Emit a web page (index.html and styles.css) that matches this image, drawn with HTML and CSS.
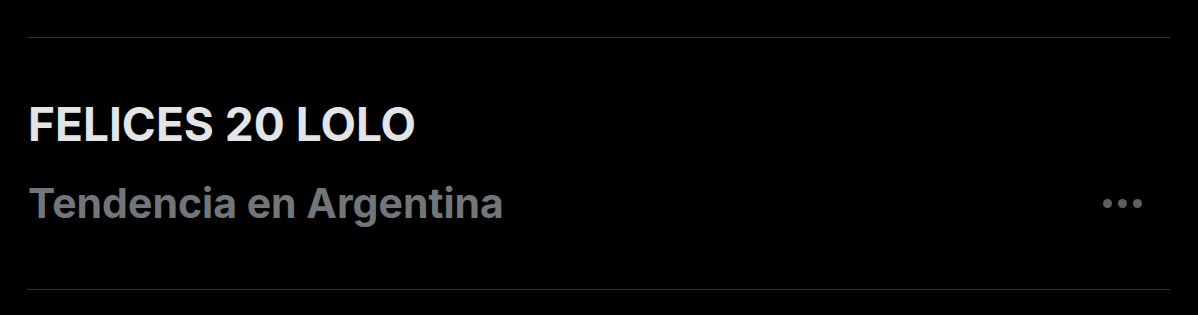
FILE: index.html
```html
<!DOCTYPE html>
<html>
<head>
    <meta charset="UTF-8">
    <title>Tendencia</title>
    <link rel="stylesheet" href="styles.css">
</head>
<body>
    <div class="trend">
        <div class="trend-body">
            <div class="trend-title">FELICES 20 LOLO</div>
            <div class="trend-row">
                <div class="trend-meta">Tendencia en Argentina</div>
                <div class="more">
                    <span class="dot"></span>
                    <span class="dot"></span>
                    <span class="dot"></span>
                </div>
            </div>
        </div>
    </div>
</body>
</html>
```

FILE: styles.css
```css
body {
    margin: 0;
    background: #000;
    font-family: Inter, "Noto Sans", sans-serif;
    height: 315px;
    overflow: hidden;
}

.trend {
    margin: 37px 28px 0 27px;
    border-top: 1px solid #2f3336;
    border-bottom: 1px solid #2f3336;
    height: 253px;
    box-sizing: border-box;
}

.trend-body {
    padding: 58px 0 0 1px;
}

.trend-title {
    color: #e2e4e5;
    font-size: 46px;
    font-weight: 700;
    line-height: 56px;
}

.trend-row {
    display: flex;
    align-items: center;
    justify-content: space-between;
    margin-top: 26px;
}

.trend-meta {
    color: #71767b;
    font-size: 41px;
    font-weight: 700;
    line-height: 50px;
}

.more {
    display: flex;
    gap: 6px;
    margin-right: 28px;
}

.dot {
    width: 9px;
    height: 9px;
    border-radius: 50%;
    background: #5b5f63;
}
```
